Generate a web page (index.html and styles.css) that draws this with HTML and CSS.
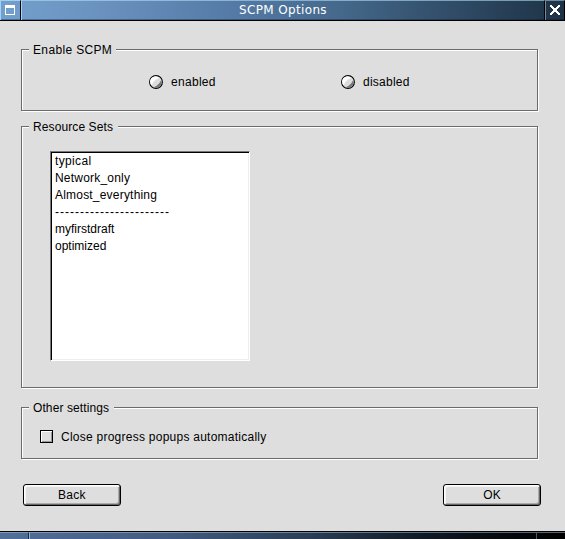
FILE: index.html
```html
<!DOCTYPE html>
<html lang="en">
<head>
<meta charset="utf-8">
<title>SCPM Options</title>
<link rel="stylesheet" href="styles.css">
</head>
<body>
<div class="window">
  <header class="titlebar">
    <div class="menu-button">
      <svg width="10" height="10" viewBox="0 0 10 10" shape-rendering="crispEdges"><path fill="#fff" fill-rule="evenodd" d="M0 0h10v10H0zM1 3v6h8V3z"/></svg>
    </div>
    <h1 class="title"><span>SCPM Options</span></h1>
    <div class="close-button">
      <svg width="10" height="10" viewBox="0 0 10 10" shape-rendering="crispEdges"><path fill="#fff" d="M0 0h2v1h1v1h1v1h2V2h1V1h1V0h2v2H9v1H8v1H7v2h1v1h1v1h1v2H8V9H7V8H6V7H4v1H3v1H2v1H0V8h1V7h1V6h1V4H2V3H1V2H0z"/></svg>
    </div>
  </header>
  <main class="content">
    <section class="group enable">
      <h2 class="legend"><span class="t-enable">Enable SCPM</span></h2>
      <div class="radios">
        <label class="radio">
          <svg class="knob" width="14" height="14" viewBox="0 0 14 14"><circle cx="7" cy="7" r="6.4" fill="#ddd" stroke="#000" stroke-width="1.1"/><path d="M12.2 5A5.5 5.5 0 0 1 5 12.2L8 10.5 10.5 8z" fill="#777"/><path d="M2.6 10.5A5.4 5.4 0 0 1 10.5 2.8L7 4.5 4.5 7z" fill="#fff"/></svg>
          <span class="t-enabled">enabled</span>
        </label>
        <label class="radio">
          <svg class="knob" width="14" height="14" viewBox="0 0 14 14"><circle cx="7" cy="7" r="6.4" fill="#ddd" stroke="#000" stroke-width="1.1"/><path d="M12.2 5A5.5 5.5 0 0 1 5 12.2L8 10.5 10.5 8z" fill="#777"/><path d="M2.6 10.5A5.4 5.4 0 0 1 10.5 2.8L7 4.5 4.5 7z" fill="#fff"/></svg>
          <span class="t-disabled">disabled</span>
        </label>
      </div>
    </section>
    <section class="group resources">
      <h2 class="legend"><span class="t-resource">Resource Sets</span></h2>
      <ul class="list">
        <li class="t-typical">typical</li>
        <li class="t-network">Network_only</li>
        <li class="t-almost">Almost_everything</li>
        <li class="t-dashes">-----------------------</li>
        <li class="t-draft">myfirstdraft</li>
        <li class="t-optimized">optimized</li>
      </ul>
    </section>
    <section class="group other">
      <h2 class="legend"><span class="t-other">Other settings</span></h2>
      <label class="check"><i class="box"></i><span class="t-close">Close progress popups automatically</span></label>
    </section>
    <div class="actions">
      <button class="button"><span class="t-back">Back</span></button>
      <button class="button"><span class="t-ok">OK</span></button>
    </div>
  </main>
  <footer class="resize"><i class="grip"></i><i class="edge"></i><i class="grip"></i></footer>
</div>
</body>
</html>
```
FILE: styles.css
```css
* { box-sizing: border-box; }
body {
  margin: 0;
  background: #dedede;
  color: #000;
  font: 12px/17px "Liberation Sans", Arial, sans-serif;
}
.window {
  display: flex;
  flex-direction: column;
  width: 565px;
  height: 539px;
  overflow: hidden;
}
h1, h2, ul { margin: 0; padding: 0; font-size: inherit; font-weight: normal; list-style: none; }
span, li { white-space: nowrap; }

.titlebar {
  display: flex;
  flex: none;
  height: 21px;
  border-bottom: 1px solid #000;
  background: linear-gradient(to right, #739fcd 0, #6b92bf 18%, #557ba7 40%, #45698b 60%, #304c67 80%, #1d3245 100%);
  box-shadow: inset 0 -1px 0 rgba(0, 20, 50, .35);
}
.menu-button, .title, .close-button {
  display: flex;
  align-items: center;
  justify-content: center;
  padding-bottom: 1px;
  border-top: 1px solid rgba(190, 235, 255, .65);
}
.menu-button { width: 21px; padding-right: 1px; border-left: 1px solid #9ed3fa; border-right: 1px solid #000; }
.title {
  flex: 1;
  border-left: 1px solid #9ed3fa;
  border-right: 1px solid #000;
  border-top-color: rgba(175, 220, 245, .6);
  color: #fff;
  font: 12px/18px "DejaVu Sans", sans-serif;
}
.title span { letter-spacing: .35px; }
.close-button { width: 20px; border-left: 1px solid #71899c; border-right: 1px solid #000; border-top-color: #71899c; }

.content { flex: 1; padding: 28px 27px 0 21px; }
.group {
  width: 517px;
  border: 1px solid #6b6b6b;
  box-shadow: 1px 1px 0 #fff, inset 1px 1px 0 #fff;
}
.enable { height: 62px; }
.resources { height: 262px; margin-top: 15px; }
.other { height: 52px; margin-top: 19px; }
.legend {
  width: max-content;
  height: 17px;
  margin: -9px 0 0 7px;
  padding: 1px 4px 0;
  background: #dedede;
}
.enable .legend { width: 87px; }
.resources .legend { width: 89px; }
.other .legend { width: 85px; }

.radios { display: flex; padding: 16px 0 0 127px; }
.radio { display: flex; align-items: center; gap: 8px; width: 192px; height: 17px; }
.knob { flex: none; margin-top: -1px; }

.list {
  width: 200px;
  height: 210px;
  margin: 16px 0 0 28px;
  padding: 1px 0 0 4px;
  border: 1px solid;
  border-color: #777 #fff #fff #777;
  box-shadow: inset 1px 1px 0 #000, inset -1px -1px 0 #eee;
  background: #fff;
}
.list li { height: 17px; }

.check { display: flex; align-items: center; gap: 8px; height: 17px; margin: 13px 0 0 18px; }
.box {
  width: 13px;
  height: 13px;
  margin-top: -3px;
  border: 1px solid #000;
  box-shadow: inset 1px 1px 0 #fff, inset -1px -1px 0 #999;
}

.t-enable { letter-spacing: .35px; }
.t-enabled, .t-back { letter-spacing: .3px; }
.t-disabled, .t-close { letter-spacing: .25px; }
.t-resource, .t-other { letter-spacing: .1px; }
.t-typical { letter-spacing: .35px; }
.t-network, .t-almost { letter-spacing: .2px; }
.t-dashes { letter-spacing: 1px; }

.actions { display: flex; justify-content: space-between; width: 518px; margin: 25px 0 0 2px; }
.button {
  width: 98px;
  height: 22px;
  padding: 1px 0 0;
  border: 1px solid #000;
  border-radius: 3px;
  background: #dedede;
  box-shadow: inset 1px 1px 0 #fff, inset -1px -1px 0 #666, inset 2px 2px 0 #f4f4f4, inset -2px -2px 0 #aaa;
  color: #000;
  font: inherit;
}

.resize {
  display: flex;
  flex: none;
  height: 8px;
  border-top: 1px solid #000;
  background: linear-gradient(to right, #526f99, #425b80 30%, #2a3d54 55%, #101923 75%, #05070a 90%, #000);
}
.grip, .edge { border-top: 1px solid rgba(170, 200, 225, .5); }
.grip { width: 29px; border-right: 1px solid #1a2b40; }
.edge { flex: 1; border-left: 1px solid #8fb4d8; }
.resize .grip:last-child { border-right: 0; border-left: 1px solid #555; }
```
